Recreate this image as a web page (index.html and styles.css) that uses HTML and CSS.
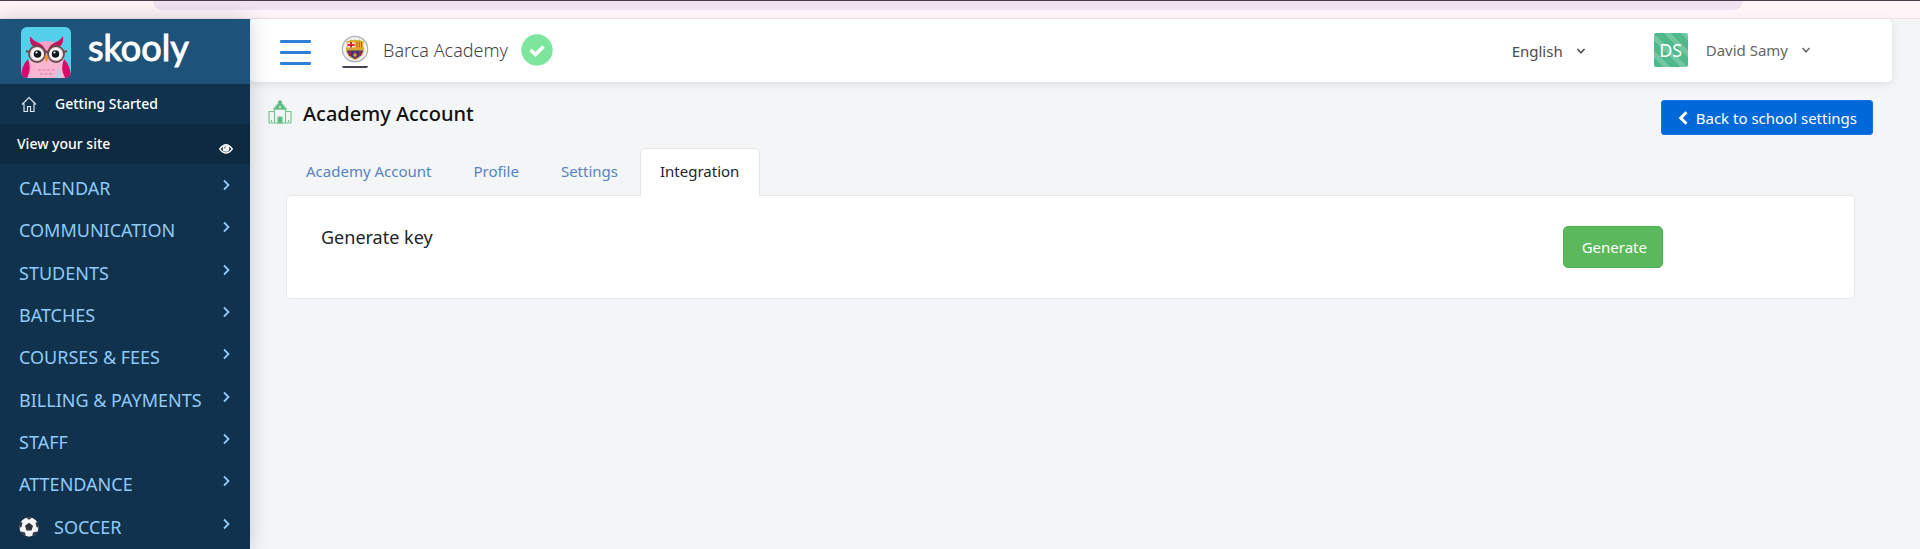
FILE: index.html
```html
<!DOCTYPE html>
<html lang="en">
<head>
<meta charset="utf-8">
<title>Academy Account</title>
<link rel="stylesheet" href="styles.css">
</head>
<body>
<svg class="defs" aria-hidden="true">
  <symbol id="chev" viewBox="0 0 10 12"><path d="M2 1.5L6.5 6L2 10.5" fill="none" stroke="currentColor" stroke-width="1.8"/></symbol>
  <symbol id="down" viewBox="0 0 10 8"><path d="M1.5 2L5 5.8L8.5 2" fill="none" stroke="currentColor" stroke-width="1.5"/></symbol>
</svg>
<div class="browser-strip"><div class="address-pill"></div></div>
<div class="app">
  <aside class="sidebar">
    <a class="brand" href="#">
      <svg class="owl" viewBox="0 0 50 51" aria-hidden="true">
        <defs><clipPath id="tile"><rect width="50" height="51" rx="6"/></clipPath></defs>
        <g clip-path="url(#tile)">
          <rect width="50" height="51" fill="#55d0ea"/>
          <path d="M7 51Q5 36 12 21Q26 10 39 21Q46 36 44 51Z" fill="#f9b6d3"/>
          <path d="M7 32Q0 39 0 51H6Q11 42 7 32ZM43 32Q50 39 50 51H44Q39 42 43 32Z" fill="#d8096b"/>
          <path d="M14 17Q26 11 37 17L26 27Z" fill="#f6a2c4"/>
          <path d="M9 9Q12 14 18 16Q24 19 26 27Q27 19 33 16Q39 14 42 9Q43 17 38 20Q30 19 26 27Q21 19 13 20Q8 17 9 9Z" fill="#c81261"/>
          <circle cx="16" cy="27" r="8" fill="#f9d5e3" stroke="#684d4a" stroke-width="1.800"/>
          <circle cx="35" cy="27" r="8" fill="#f9d5e3" stroke="#684d4a" stroke-width="1.800"/>
          <circle cx="16.500" cy="27" r="6" fill="#fff"/><circle cx="34.500" cy="27" r="6" fill="#fff"/>
          <path d="M24 25Q25.500 24 27 25M8 25L5 24M43 25L46 24" fill="none" stroke="#684d4a" stroke-width="2"/>
          <circle cx="16.500" cy="27" r="3.800" fill="#101820"/><circle cx="34.500" cy="27" r="3.800" fill="#101820"/>
          <circle cx="15.500" cy="25.500" r="1.100" fill="#fff"/><circle cx="33.500" cy="25.500" r="1.100" fill="#fff"/>
          <path d="M23.500 30Q25.500 26 27.500 30L25.500 36Z" fill="#f58a27"/>
          <path d="M17 43H35M19 47H33" stroke="#de8db0" stroke-width="1.500" stroke-dasharray="3 1.500"/>
          <path d="M37 41Q40 46 39 51H35Z" fill="#a9d5e8"/>
        </g>
      </svg>
      <span class="wordmark">skooly</span>
    </a>
    <a class="start" href="#">
      <svg width="16" height="17" viewBox="0 0 16 17" fill="none" stroke="#dbe7f1" stroke-width="1.200" aria-hidden="true"><path d="M1 8.500L8 1.500L15 8.500M3 7.500V15.500H6.500V10.500H9.500V15.500H13V7.500"/></svg>
      <span>Getting Started</span>
    </a>
    <a class="view" href="#">
      <span>View your site</span>
      <svg width="14" height="10" viewBox="0 0 14 10" aria-hidden="true"><path d="M0.700 5Q7 -3.500 13.300 5Q7 13 0.700 5Z" fill="none" stroke="#fff" stroke-width="1.300"/><circle cx="7" cy="4.500" r="3.300" fill="#fff"/><path d="M5.200 4.500Q5.200 2.700 7 2.700" stroke="#0d2a40" stroke-width=".7" fill="none"/></svg>
    </a>
    <nav class="menu">
      <a href="#"><span>CALENDAR</span><svg class="chev"><use href="#chev"/></svg></a>
      <a href="#"><span>COMMUNICATION</span><svg class="chev"><use href="#chev"/></svg></a>
      <a href="#"><span>STUDENTS</span><svg class="chev"><use href="#chev"/></svg></a>
      <a href="#"><span>BATCHES</span><svg class="chev"><use href="#chev"/></svg></a>
      <a href="#"><span>COURSES &amp; FEES</span><svg class="chev"><use href="#chev"/></svg></a>
      <a href="#"><span>BILLING &amp; PAYMENTS</span><svg class="chev"><use href="#chev"/></svg></a>
      <a href="#"><span>STAFF</span><svg class="chev"><use href="#chev"/></svg></a>
      <a href="#"><span>ATTENDANCE</span><svg class="chev"><use href="#chev"/></svg></a>
      <a href="#">
        <svg class="ball" width="20" height="20" viewBox="0 0 20 20" aria-hidden="true"><defs><clipPath id="ballclip"><circle cx="10" cy="10" r="9.700"/></clipPath></defs><g clip-path="url(#ballclip)"><circle cx="10" cy="10" r="10" fill="#f4f4f4"/><path d="M10 5.800L14 8.800L12.500 13.500H7.500L6 8.800ZM6 0H14L10 2.800ZM0 5L3.500 5.500L2.500 10L0 11ZM20 5L16.500 5.500L17.500 10L20 11ZM2 14.500L6 15.500L7 20H2ZM18 14.500L14 15.500L13 20H18Z" fill="#30343a"/></g></svg>
        <span>SOCCER</span><svg class="chev"><use href="#chev"/></svg></a>
    </nav>
  </aside>
  <main class="main">
    <header class="topbar">
      <button class="burger" type="button" aria-label="Toggle menu"><i></i><i></i><i></i></button>
      <svg class="crest" width="28" height="34" viewBox="0 0 28 34" aria-hidden="true">
        <circle cx="14" cy="14" r="12.700" fill="#f1f1f3" stroke="#aeb0b6" stroke-width="1.200"/>
        <path d="M5 6Q8 7 9.500 4.500Q12 6 14 4.500Q16 6 18.500 4.500Q20 7 23 6Q21 10 23 13Q24 21 14 25Q4 21 5 13Q7 10 5 6Z" fill="#d7a72f"/>
        <path d="M6.500 7.500H13.500V12.500H6.500Z" fill="#f8eeee"/><path d="M10 7V12.500M6.500 10H13.500" stroke="#d72333" stroke-width="2"/>
        <path d="M14.500 7.500H21.500V12.500H14.500Z" fill="#f3cf38"/><path d="M16 7V12.500M18.200 7V12.500M20.400 7V12.500" stroke="#d43531" stroke-width="1.100"/>
        <path d="M6 15.500H22Q21 21 14 23.800Q7 21 6 15.500Z" fill="#2b3c87"/><path d="M9 16V21M14 16V23.500M19 16V21" stroke="#a91f49" stroke-width="2.200"/>
        <circle cx="14" cy="20" r="1.800" fill="#d9a72d"/>
        <path d="M1 31H27Q27 33 24 33H4Q1 33 1 31Z" fill="#444550"/>
      </svg>
      <span class="academy">Barca Academy</span>
      <svg class="verified" width="32" height="32" viewBox="0 0 32 32" aria-hidden="true"><circle cx="16" cy="16" r="15.700" fill="#7de69d"/><path d="M9.500 16L14.500 20.500L22.500 12.500" fill="none" stroke="#fff" stroke-width="3.600"/></svg>
      <button class="pick language" type="button">English <svg class="down"><use href="#down"/></svg></button>
      <button class="pick user" type="button"><span class="avatar">DS</span>David Samy <svg class="down"><use href="#down"/></svg></button>
    </header>
    <div class="heading">
      <svg width="24" height="24" viewBox="0 0 24 24" fill="none" stroke="#72c593" stroke-width="1.200" aria-hidden="true"><path d="M1 23V11.500H6.500V23M17.500 23V11.500H23V23M0.500 23H23.500M6.500 23V9H17.500V23"/><path d="M6 9L10.500 3.500V2L12 .5L13.500 2V3.500L18 9Z" fill="#58b87e"/><path d="M10 23V17H14V23ZM3.500 20V22M20.500 20V22" fill="#58b87e"/><circle cx="12" cy="7" r="1.300" fill="#bce1ca" stroke="none"/></svg>
      <h1>Academy Account</h1>
      <a class="back" href="#"><svg width="10" height="14" viewBox="0 0 10 14" aria-hidden="true"><path d="M8.500 1.200L2.700 7L8.500 12.800" fill="none" stroke="#fff" stroke-width="3"/></svg>Back to school settings</a>
    </div>
    <section class="account">
      <nav class="tabs">
        <a href="#">Academy Account</a><a href="#">Profile</a><a href="#">Settings</a><a class="active" href="#" aria-current="page">Integration</a>
      </nav>
      <div class="panel">
        <h2>Generate key</h2>
        <button class="generate" type="button">Generate</button>
      </div>
    </section>
  </main>
</div>
</body>
</html>
```
FILE: styles.css
```css
* { box-sizing: border-box; }
body {
  margin: 0;
  min-height: 100vh;
  display: flex;
  flex-direction: column;
  background: #f4f5f7;
  color: #212529;
  font: 15px/24px "Noto Sans", sans-serif;
}
a { color: inherit; text-decoration: none; }
button { font: inherit; color: inherit; cursor: pointer; }
h1, h2 { margin: 0; }
svg { flex: none; }
.defs { position: absolute; width: 0; height: 0; }

.browser-strip {
  height: 19px;
  padding: 0 177px 0 153px;
  background: #fff5f8;
  border-top: 1px solid #4b3b4b;
  border-bottom: 1px solid #f3e4e9;
}
.address-pill { height: 9px; background: #efe3ef; border-radius: 0 0 14px 14px; }
.app { flex: 1; display: flex; }

.sidebar {
  width: 250px;
  flex: none;
  display: flex;
  flex-direction: column;
  background: #10324c;
  color: #fff;
  box-shadow: 0 0 20px rgba(0, 0, 0, .18);
  z-index: 1;
}
.brand {
  height: 65px;
  display: flex;
  align-items: center;
  gap: 17px;
  padding: 2px 21px 0;
  background: #1d5379;
}
.owl { width: 50px; height: 51px; }
.wordmark { font: 36px/48px Lato, sans-serif; padding-bottom: 12px; -webkit-text-stroke: 1px #fff; }
.start, .view { height: 40px; display: flex; align-items: center; font-size: 14px; font-weight: 500; }
.start { gap: 18px; padding: 0 21px; }
.view { justify-content: space-between; padding: 0 17px; background: #0d2a40; }
.view svg { margin-top: 10px; }
.menu { flex: 1; display: flex; flex-direction: column; padding: 2px 0; color: #90caf9; font-size: 18px; }
.menu a { flex: 1; min-height: 40px; display: flex; align-items: center; padding: 2px 18px 0 19px; }
.chev { width: 10px; height: 12px; margin: 0 0 6px auto; }
.ball { margin-right: 15px; }

.main { flex: 1; min-width: 0; }
.topbar {
  height: 63px;
  margin-right: 28px;
  padding: 0 81px 0 30px;
  display: flex;
  align-items: center;
  background: #fff;
  border-radius: 5px;
  box-shadow: 0 2px 8px rgba(0, 0, 0, .1);
}
.burger {
  width: 31px;
  height: 25px;
  margin-top: 3px;
  padding: 0;
  border: 0;
  background: none;
  display: flex;
  flex-direction: column;
  justify-content: space-between;
}
.burger i { height: 3px; background: #2f7fd8; border-radius: 1px; }
.crest { margin: 2px 14px 0 30px; }
.academy { font-size: 18px; font-weight: 300; color: #444; }
.verified { margin-left: 13px; }
.academy, .verified { margin-bottom: 1px; }
.pick { display: flex; align-items: center; padding: 0; border: 0; background: none; }
.down { width: 10px; height: 8px; margin-left: 13px; }
.language { margin-left: auto; color: #4c4c4c; }
.user { margin-left: 68px; padding-bottom: 2px; color: #666; }
.avatar {
  width: 34px;
  height: 34px;
  margin-right: 18px;
  border-radius: 2px;
  color: #fff;
  font-size: 18px;
  line-height: 34px;
  background: repeating-linear-gradient(45deg, #50b98b 0 7px, #70c7a0 7px 12px);
}

.heading { display: flex; align-items: flex-start; padding: 18px 47px 0 18px; }
.heading h1 { margin-left: 11px; font-size: 20px; line-height: 28px; font-weight: 500; color: #111; }
.back {
  display: flex;
  align-items: center;
  gap: 8px;
  height: 35px;
  margin-left: auto;
  padding: 0 15px 0 16px;
  border: 1px solid #1673e6;
  border-radius: 3px;
  background: #0069d9;
  color: #fff;
}
.account { margin: 13px 65px 0 36px; }
.tabs { display: flex; gap: 1px; color: #5683c4; }
.tabs a { padding: 10px 20px 12px 19px; border: 1px solid transparent; border-bottom: 0; }
.tabs .active {
  margin-bottom: -1px;
  padding-bottom: 13px;
  color: #212529;
  background: #fff;
  border-color: #e4e5e7;
  border-radius: 5px 5px 0 0;
  z-index: 1;
}
.panel {
  display: grid;
  grid-template-columns: 10fr 2fr;
  align-items: start;
  padding: 30px 43px 30px 34px;
  background: #fff;
  border: 1px solid #e7e8ea;
  border-radius: 5px;
}
.panel h2 { font-size: 18px; line-height: 22px; font-weight: 400; }
.generate {
  justify-self: start;
  height: 42px;
  padding: 0 15px 0 18px;
  border: 1px solid #4fae50;
  border-radius: 5px;
  background: #5cb85c;
  color: #fff;
}
```
